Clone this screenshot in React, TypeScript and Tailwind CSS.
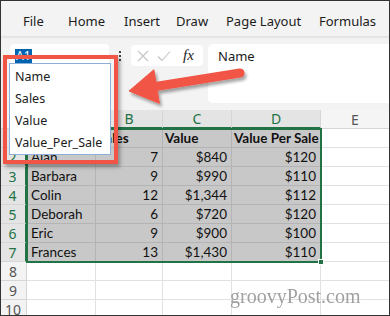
import React from "react"

const tabs = [
  { label: "File", w: "w-[45px]" },
  { label: "Home", w: "w-[56px]" },
  { label: "Insert", w: "w-[52px]" },
  { label: "Draw", w: "w-[50px]" },
  { label: "Page Layout", w: "w-[93px]" },
  { label: "Formulas", w: "w-[60px]" },
]

const columns = ["A", "B", "C", "D", "E"]

const data: string[][] = [
  ["Name", "Sales", "Value", "Value Per Sale"],
  ["Alan", "7", "$840", "$120"],
  ["Barbara", "9", "$990", "$110"],
  ["Colin", "12", "$1,344", "$112"],
  ["Deborah", "6", "$720", "$120"],
  ["Eric", "9", "$900", "$100"],
  ["Frances", "13", "$1,430", "$110"],
]

const names = ["Name", "Sales", "Value", "Value_Per_Sale"]

const ui = { fontFamily: "'Noto Sans', 'Open Sans', sans-serif" }
const cellFont = { fontFamily: "Lato, 'Liberation Sans', sans-serif" }

function Ribbon() {
  return (
    <div className="h-[36px] bg-[#f3f3f3] flex items-center pl-[23px] pt-[8px] text-[13px] text-[#1b1b1b]" style={ui}>
      {tabs.map((t) => (
        <span key={t.label} className={`${t.w} shrink-0 whitespace-nowrap`}>
          {t.label}
        </span>
      ))}
    </div>
  )
}

function FormulaBar() {
  return (
    <div className="h-[74px] bg-[#f3f3f3] border-t border-[#e2e2e2] shadow-[inset_0_1px_2px_rgba(0,0,0,0.06)] flex items-start pl-[10px] pt-[7px]" style={ui}>
      <div className="w-[99px] h-[23px] bg-white rounded-[4px] flex items-center pl-[5px]">
        <span className="bg-[#0063b1] text-white text-[12px] leading-[14px] px-[1px]">A1</span>
      </div>
      <div className="w-[22px] h-[23px] flex flex-col items-center justify-center gap-[2px]">
        <span className="w-[2px] h-[2px] bg-[#444]" />
        <span className="w-[2px] h-[2px] bg-[#444]" />
        <span className="w-[2px] h-[2px] bg-[#444]" />
      </div>
      <div className="w-[72px] h-[21px] mt-[1px] bg-white rounded-[4px] flex items-center pl-[6px] gap-[8px]">
        <svg width="12" height="12" viewBox="0 0 12 12" fill="none" stroke="#c4c4c4" strokeWidth="1.1">
          <path d="M1 1 L11 11 M11 1 L1 11" />
        </svg>
        <svg width="14" height="12" viewBox="0 0 14 12" fill="none" stroke="#c4c4c4" strokeWidth="1.1">
          <path d="M1 6.5 L5 10.5 L13 1.5" />
        </svg>
        <span className="ml-[4px] text-[15px] italic text-[#222] leading-none" style={{ fontFamily: "'Liberation Serif', serif" }}>
          fx
        </span>
      </div>
      <div className="flex-1 h-[59px] ml-[5px] -mr-[6px] bg-white rounded-[5px] pl-[10px] pt-[3px] text-[13px] text-[#1b1b1b]">
        Name
      </div>
    </div>
  )
}

function Sheet() {
  return (
    <div className="grid grid-cols-[27px_69px_67px_69px_89px_1fr] text-[13.5px] text-[#111]" style={cellFont}>
      <div className="h-[19px] bg-[#f3f3f3] border-r border-b border-[#d6d6d6]" />
      {columns.map((c, i) => {
        const sel = i < 4
        return (
          <div
            key={c}
            className={`h-[19px] flex items-center justify-center border-r border-[#d6d6d6] text-[14px] ${
              sel ? "bg-[#e4e4e4] text-[#217346] border-b-2 border-b-[#217346]" : "bg-[#f5f5f5] text-[#555] border-b border-b-[#d6d6d6]"
            }`}
            style={ui}
          >
            {c}
          </div>
        )
      })}
      {Array.from({ length: 10 }).map((_, r) => {
        const row = data[r]
        const selRow = r < 7
        return (
          <React.Fragment key={r}>
            <div
              className={`h-[19px] flex items-center justify-center border-b border-[#d6d6d6] text-[14px] ${
                selRow ? "bg-[#e4e4e4] text-[#217346] border-r-2 border-r-[#217346]" : "bg-[#f3f3f3] text-[#555] border-r border-r-[#d6d6d6]"
              }`}
              style={ui}
            >
              {r + 1}
            </div>
            {columns.map((c, ci) => {
              const sel = selRow && ci < 4
              const val = row && ci < 4 ? row[ci] : ""
              const bold = r === 0
              const right = r > 0 && ci > 0
              return (
                <div
                  key={c}
                  className={`h-[19px] flex items-center whitespace-nowrap overflow-hidden border-r border-b ${
                    sel ? "bg-[#c8c8c8] border-[#b4b4b4]" : "bg-white border-[#e1e1e1]"
                  } ${right ? "justify-end pr-[4px]" : bold ? "pl-[2px]" : "pl-[4px]"} ${bold ? "font-bold" : ""}`}
                >
                  {val}
                </div>
              )
            })}
          </React.Fragment>
        )
      })}
    </div>
  )
}

function Arrow() {
  return (
    <svg className="absolute left-0 top-0 pointer-events-none" width="390" height="316" viewBox="0 0 390 316">
      <defs>
        <filter id="sh" x="-20%" y="-20%" width="140%" height="160%">
          <feDropShadow dx="2" dy="3" stdDeviation="1.6" floodColor="#000" floodOpacity="0.35" />
        </filter>
      </defs>
      <g filter="url(#sh)" fill="#f05545" stroke="#f05545">
        <line x1="154" y1="86.8" x2="240" y2="73" strokeWidth="9" strokeLinecap="round" />
        <polygon points="129,91 153.9,69.7 159.4,103.3" strokeWidth="1" strokeLinejoin="round" />
      </g>
    </svg>
  )
}

export default function App() {
  return (
    <div className="relative w-[390px] h-[316px] overflow-hidden bg-white">
      <Ribbon />
      <FormulaBar />
      <Sheet />

      {/* selection outline */}
      <div className="absolute left-[26px] top-[128px] w-[296px] h-[135px] border-2 border-[#217346] pointer-events-none" />
      <div className="absolute left-[318px] top-[259px] w-[6px] h-[6px] bg-[#217346] border border-white" />

      {/* name box dropdown */}
      <div className="absolute left-[9px] top-[63px] w-[102px] h-[92px] bg-white border border-[#8fb0d6] pt-[2px] pl-[5px] text-[12.5px] text-[#1b1b1b]" style={ui}>
        {names.map((n) => (
          <div key={n} className="h-[22px] flex items-center whitespace-nowrap">
            {n}
          </div>
        ))}
      </div>

      {/* red callout box */}
      <div className="absolute left-[3px] top-[55px] w-[115px] h-[109px] border-[4px] border-[#f05545] shadow-[2px_3px_4px_rgba(0,0,0,0.35)] pointer-events-none" />

      <Arrow />

      <div className="absolute left-[230px] top-[281px] text-[20px] text-[#8a8a8a] opacity-80" style={{ fontFamily: "'Liberation Serif', serif" }}>
        groovyPost.com
      </div>

      <div className="absolute inset-0 border border-[#333] pointer-events-none" />
    </div>
  )
}
